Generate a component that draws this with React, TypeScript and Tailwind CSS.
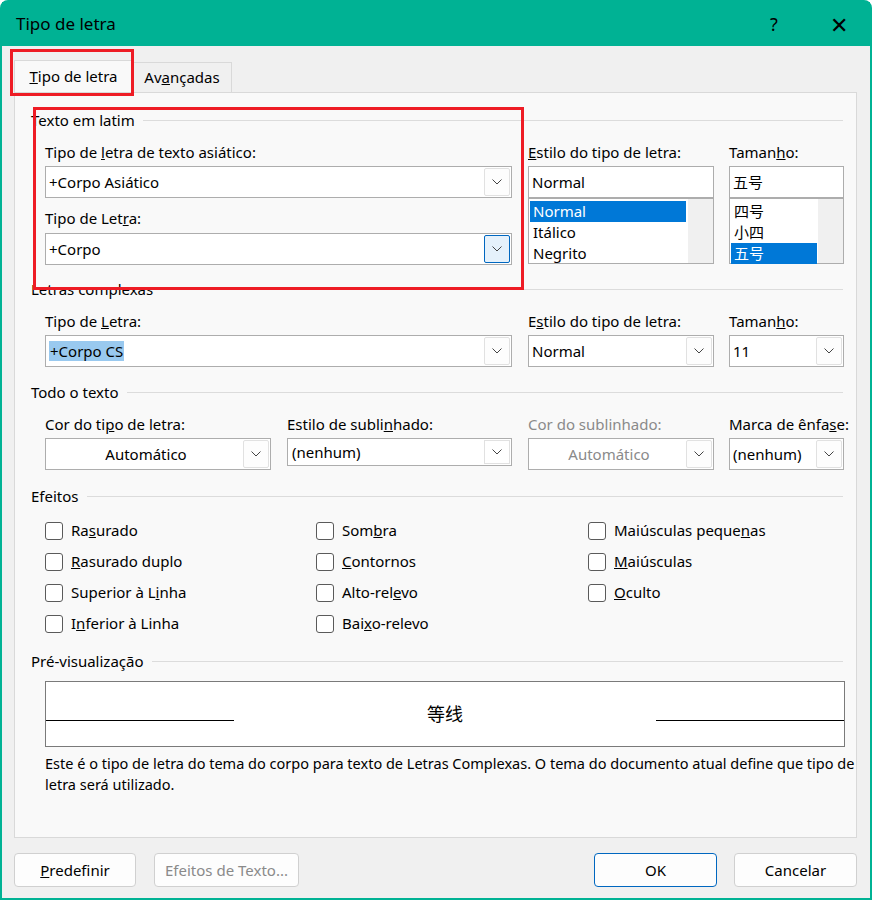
import React from "react";

const font = { fontFamily: '"Noto Sans", "Noto Sans CJK SC", sans-serif' };

function Chevron() {
  return (
    <svg width="12" height="8" viewBox="0 0 12 8">
      <path d="M1.5 1.5 L6 6 L10.5 1.5" fill="none" stroke="#444" strokeWidth="1" />
    </svg>
  );
}

function Arrow({ active = false }: { active?: boolean }) {
  return (
    <div
      className={`flex h-[28px] w-[26px] items-center justify-center rounded-[2px] border ${
        active ? "border-[#0067c0] bg-[#e5f1fb]" : "border-[#e1e1e1] bg-[#fdfdfd]"
      }`}
    >
      <Chevron />
    </div>
  );
}

function Combo({
  w,
  text,
  center = false,
  disabled = false,
  active = false,
  arrow = true,
  hi = false,
}: {
  w: string;
  text: string;
  center?: boolean;
  disabled?: boolean;
  active?: boolean;
  arrow?: boolean;
  hi?: boolean;
}) {
  return (
    <div className={`flex h-[32px] ${w} items-center border border-[#adadad] bg-white pl-[3px] pr-[1px]`}>
      <div className={`flex-1 ${center ? "text-center" : ""} ${disabled ? "text-[#8a8a8a]" : "text-black"}`}>
        {hi ? <span className="bg-[#99c9ef] px-[1px]">{text}</span> : text}
      </div>
      {arrow && <Arrow active={active} />}
    </div>
  );
}

function Header({ title }: { title: string }) {
  return (
    <div className="flex h-[20px] items-center gap-2 pr-[13px]">
      <span className="leading-5">{title}</span>
      <div className="h-px flex-1 bg-[#dcdcdc]" />
    </div>
  );
}

function ListBox({ w, items, sel, hiW }: { w: string; items: string[]; sel: number; hiW: string }) {
  return (
    <div className={`flex h-[66px] ${w} border border-[#adadad] bg-white`}>
      <div className="flex-1 pt-[2px] pl-[1px]">
        {items.map((it, i) => (
          <div
            key={it}
            className={`h-[21px] ${hiW} pl-[3px] leading-[21px] ${i === sel ? "bg-[#0078d7] text-white" : ""}`}
          >
            {it}
          </div>
        ))}
      </div>
      <div className="w-[25px] bg-[#f0f0f0]" />
    </div>
  );
}

function Check({ children }: { children: React.ReactNode }) {
  return (
    <div className="flex h-[31px] items-center gap-[8px]">
      <div className="h-[18px] w-[18px] rounded-[3px] border border-[#5a5a5a] bg-white" />
      <span>{children}</span>
    </div>
  );
}

function Btn({ children, w, disabled = false, primary = false }: { children: React.ReactNode; w: string; disabled?: boolean; primary?: boolean }) {
  return (
    <div
      className={`flex h-[34px] ${w} items-center justify-center rounded-[4px] border ${
        primary ? "border-[#0067c0]" : "border-[#d0d0d0]"
      } bg-[#fdfdfd] ${disabled ? "text-[#8a8a8a]" : "text-black"}`}
    >
      {children}
    </div>
  );
}

export default function App() {
  return (
    <div style={font} className="relative h-[900px] w-[872px] overflow-hidden text-[15px] text-black">
      <div className="flex h-full flex-col rounded-t-[8px] border-2 border-[#00b294] bg-[#f0f0f0]">
        {/* Title bar */}
        <div className="flex h-[44px] items-center bg-[#00b294] pl-[14px]">
          <span className="flex-1 text-[17px]">Tipo de letra</span>
          <span className="w-[60px] text-[18px]">?</span>
          <span className="mr-[22px] text-[22px] leading-none">✕</span>
        </div>

        {/* Tabs */}
        <div className="mt-[14px] flex h-[32px] items-end pl-[12px]">
          <div className="flex h-[32px] w-[119px] items-center justify-center border border-b-0 border-[#d9d9d9] bg-[#f9f9f9]">
            <span>
              <u>T</u>ipo de letra
            </span>
          </div>
          <div className="flex h-[30px] w-[99px] items-center justify-center border border-b-0 border-l-0 border-[#d9d9d9] bg-[#f0f0f0]">
            <span>
              Av<u>a</u>nçadas
            </span>
          </div>
        </div>

        {/* Panel */}
        <div className="ml-[12px] h-[746px] w-[843px] border border-[#d9d9d9] bg-[#f9f9f9] pl-[16px]">
          <div className="mt-[17px]">
            <Header title="Texto em latim" />
          </div>
          <div className="mt-[12px] flex gap-[16px] pl-[14px]">
            <div className="w-[467px]">
              <div className="h-[20px] leading-5">
                Tipo de <u>l</u>etra de texto asiático:
              </div>
              <div className="mt-[4px]">
                <Combo w="w-[467px]" text="+Corpo Asiático" />
              </div>
              <div className="mt-[10px] h-[20px] leading-5">
                Tipo de Let<u>r</u>a:
              </div>
              <div className="mt-[5px]">
                <Combo w="w-[467px]" text="+Corpo" active />
              </div>
            </div>
            <div className="w-[186px]">
              <div className="h-[20px] leading-5">
                <u>E</u>stilo do tipo de letra:
              </div>
              <div className="mt-[4px]">
                <Combo w="w-[186px]" text="Normal" arrow={false} />
              </div>
              <ListBox w="w-[186px]" items={["Normal", "Itálico", "Negrito"]} sel={0} hiW="w-[156px]" />
            </div>
            <div className="ml-[-1px] w-[115px]">
              <div className="h-[20px] leading-5">
                Taman<u>h</u>o:
              </div>
              <div className="mt-[4px]">
                <Combo w="w-[115px]" text="五号" arrow={false} />
              </div>
              <ListBox w="w-[115px]" items={["四号", "小四", "五号"]} sel={2} hiW="w-[86px]" />
            </div>
          </div>

          <div className="mt-[14px]">
            <Header title="Letras complexas" />
          </div>
          <div className="mt-[12px] flex gap-[16px] pl-[14px]">
            <div>
              <div className="h-[20px] leading-5">
                Tipo de <u>L</u>etra:
              </div>
              <div className="mt-[4px]">
                <Combo w="w-[467px]" text="+Corpo CS" hi />
              </div>
            </div>
            <div>
              <div className="h-[20px] leading-5">
                E<u>s</u>tilo do tipo de letra:
              </div>
              <div className="mt-[4px]">
                <Combo w="w-[186px]" text="Normal" />
              </div>
            </div>
            <div className="ml-[-1px]">
              <div className="h-[20px] leading-5">
                Taman<u>h</u>o:
              </div>
              <div className="mt-[4px]">
                <Combo w="w-[115px]" text="11" />
              </div>
            </div>
          </div>

          <div className="mt-[15px]">
            <Header title="Todo o texto" />
          </div>
          <div className="mt-[12px] flex gap-[16px] pl-[14px]">
            <div>
              <div className="h-[20px] leading-5">
                Cor do ti<u>p</u>o de letra:
              </div>
              <div className="mt-[4px]">
                <Combo w="w-[226px]" text="Automático" center />
              </div>
            </div>
            <div>
              <div className="h-[20px] leading-5">
                Estilo de subli<u>n</u>hado:
              </div>
              <div className="mt-[4px] h-[32px]">
                <div className="flex h-[28px] w-[225px] items-center border border-[#adadad] bg-white pl-[4px] pr-[1px]">
                  <span className="flex-1">(nenhum)</span>
                  <div className="flex h-[24px] w-[26px] items-center justify-center border border-[#e1e1e1]">
                    <Chevron />
                  </div>
                </div>
              </div>
            </div>
            <div>
              <div className="h-[20px] leading-5 text-[#8a8a8a]">Cor do sublinhado:</div>
              <div className="mt-[4px]">
                <Combo w="w-[186px]" text="Automático" center disabled />
              </div>
            </div>
            <div className="ml-[-1px]">
              <div className="h-[20px] leading-5">
                Marca de ênfa<u>s</u>e:
              </div>
              <div className="mt-[4px]">
                <Combo w="w-[115px]" text="(nenhum)" />
              </div>
            </div>
          </div>

          <div className="mt-[16px]">
            <Header title="Efeitos" />
          </div>
          <div className="mt-[9px] grid grid-cols-[271px_272px_1fr] pl-[14px]">
            <div>
              <Check>
                Ra<u>s</u>urado
              </Check>
              <Check>
                <u>R</u>asurado duplo
              </Check>
              <Check>
                Superior à L<u>i</u>nha
              </Check>
              <Check>
                I<u>n</u>ferior à Linha
              </Check>
            </div>
            <div>
              <Check>
                Som<u>b</u>ra
              </Check>
              <Check>
                <u>C</u>ontornos
              </Check>
              <Check>
                Alto-rel<u>e</u>vo
              </Check>
              <Check>
                Bai<u>x</u>o-relevo
              </Check>
            </div>
            <div>
              <Check>
                Maiúsculas peque<u>n</u>as
              </Check>
              <Check>
                <u>M</u>aiúsculas
              </Check>
              <Check>
                <u>O</u>culto
              </Check>
            </div>
          </div>

          <div className="mt-[12px]">
            <Header title="Pré-visualização" />
          </div>
          <div className="ml-[14px] mt-[10px] flex h-[66px] w-[800px] items-center border border-[#7a7a7a] bg-white">
            <div className="mt-[12px] h-px w-[188px] bg-black" />
            <div className="flex-1 text-center text-[18px]">等线</div>
            <div className="mt-[12px] h-px w-[188px] bg-black" />
          </div>
          <div className="ml-[14px] mt-[6px] w-[810px] text-[14.5px] leading-[21px]">
            Este é o tipo de letra do tema do corpo para texto de Letras Complexas. O tema do documento atual define que tipo de letra será utilizado.
          </div>
        </div>

        {/* Buttons */}
        <div className="mt-[15px] flex items-center pl-[12px]">
          <Btn w="w-[122px]">
            <span>
              <u>P</u>redefinir
            </span>
          </Btn>
          <div className="ml-[18px]">
            <Btn w="w-[145px]" disabled>
              Efeitos de Texto...
            </Btn>
          </div>
          <div className="ml-[295px]">
            <Btn w="w-[123px]" primary>
              OK
            </Btn>
          </div>
          <div className="ml-[17px]">
            <Btn w="w-[123px]">Cancelar</Btn>
          </div>
        </div>
      </div>

      {/* Red highlight boxes */}
      <div className="pointer-events-none absolute left-[10px] top-[49px] h-[47px] w-[124px] border-[3px] border-[#ee1c25]" />
      <div className="pointer-events-none absolute left-[33px] top-[107px] h-[183px] w-[491px] border-[3px] border-[#ee1c25]" />
    </div>
  );
}
